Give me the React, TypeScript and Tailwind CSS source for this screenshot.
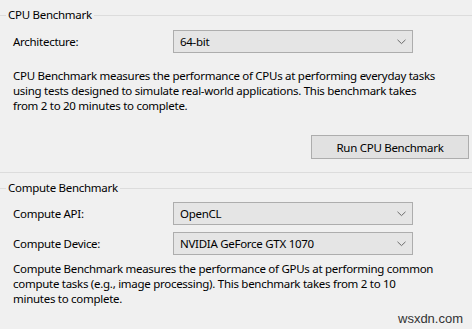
import React from "react";

const font = { fontFamily: '"Noto Sans", "Segoe UI", sans-serif' };

function Chevron() {
  return (
    <svg width="9" height="6" viewBox="0 0 9 6" className="shrink-0">
      <path d="M0.5 0.8 L4.5 4.6 L8.5 0.8" fill="none" stroke="#6b6b6b" strokeWidth="1" />
    </svg>
  );
}

function Combo({ value }: { value: string }) {
  return (
    <div className="w-[240px] h-[23px] border border-[#adadad] bg-[#e5e5e5] flex items-center justify-between pl-[6px] pr-[6px]">
      <span className="text-[11.5px] tracking-[-0.28px] leading-[15px] text-black whitespace-nowrap">{value}</span>
      <Chevron />
    </div>
  );
}

function Header({ title }: { title: string }) {
  return (
    <div className="flex items-center h-[16px]">
      <div className="w-[6px] h-px bg-[#dcdcdc]" />
      <span className="px-[2px] text-[11.5px] tracking-[-0.28px] leading-[16px] text-black whitespace-nowrap">{title}</span>
      <div className="flex-1 h-px bg-[#dcdcdc]" />
    </div>
  );
}

function Row({ label, value }: { label: string; value: string }) {
  return (
    <div className="flex items-center pl-[13px]">
      <span className="w-[160px] text-[11.5px] tracking-[-0.28px] leading-[15px] text-black">{label}</span>
      <Combo value={value} />
    </div>
  );
}

export default function App() {
  return (
    <div className="relative w-[472px] h-[329px] bg-[#f0f0f0] overflow-hidden" style={font}>
      <div className="pt-[7px]">
        <Header title="CPU Benchmark" />
        <div className="mt-[7px]">
          <Row label="Architecture:" value="64-bit" />
        </div>
        <p className="mt-[15px] pl-[13px] text-[11.5px] tracking-[-0.28px] leading-[15px] text-black whitespace-nowrap">
          CPU Benchmark measures the performance of CPUs at performing everyday tasks
          <br />
          using tests designed to simulate real-world applications. This benchmark takes
          <br />
          from 2 to 20 minutes to complete.
        </p>
        <div className="mt-[22px] flex justify-end pr-[3px]">
          <button className="w-[158px] h-[24px] border border-[#adadad] bg-[#e1e1e1] text-[11.5px] tracking-[-0.28px] leading-[15px] text-black">
            Run CPU Benchmark
          </button>
        </div>
        <div className="mt-[13px] h-px bg-[#dcdcdc]" />
        <div className="mt-[7px]">
          <Header title="Compute Benchmark" />
        </div>
        <div className="mt-[6px] flex flex-col gap-[7px]">
          <Row label="Compute API:" value="OpenCL" />
          <Row label="Compute Device:" value="NVIDIA GeForce GTX 1070" />
        </div>
        <p className="mt-[6px] pl-[13px] text-[11.5px] tracking-[-0.28px] leading-[15px] text-black whitespace-nowrap">
          Compute Benchmark measures the performance of GPUs at performing common
          <br />
          compute tasks (e.g., image processing). This benchmark takes from 2 to 10
          <br />
          minutes to complete.
        </p>
      </div>
      <div
        className="absolute left-[398px] top-[311px] text-[13px] leading-[16px] text-[#333333]"
        style={{ fontFamily: '"Liberation Sans", Arial, sans-serif' }}
      >
        wsxdn.com
      </div>
    </div>
  );
}
